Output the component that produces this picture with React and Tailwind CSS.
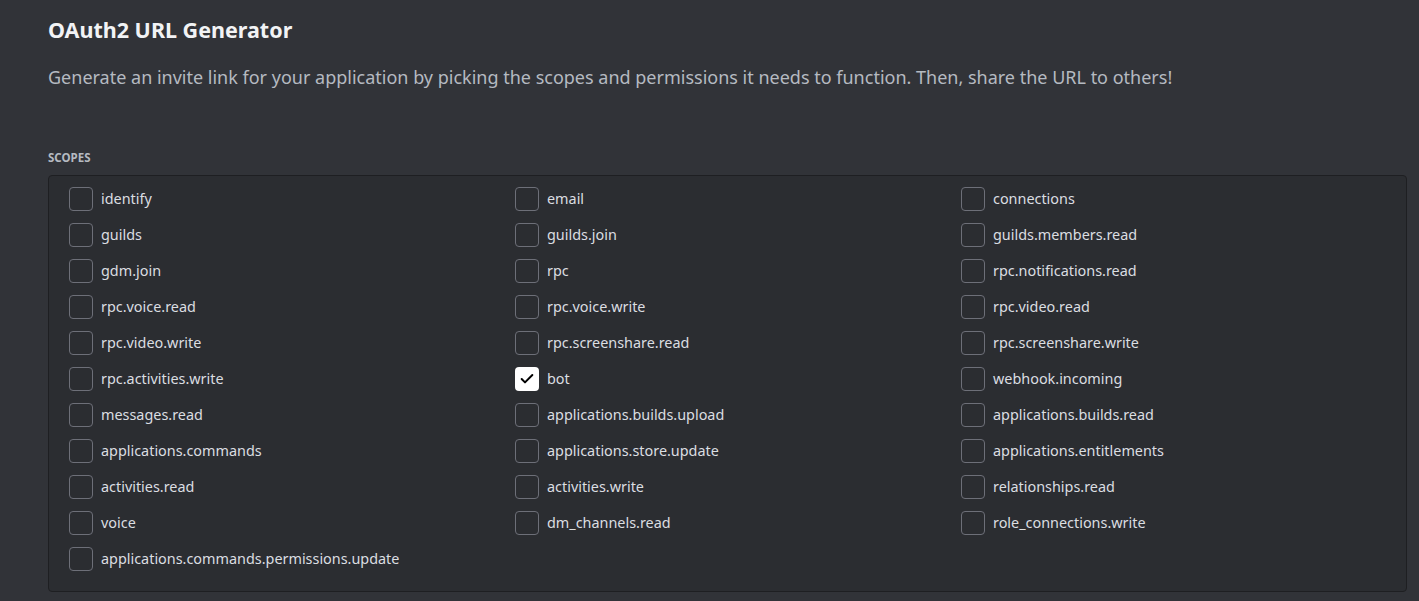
import { Check } from 'lucide-react';

const SCOPES = [
  ['identify', 'email', 'connections'],
  ['guilds', 'guilds.join', 'guilds.members.read'],
  ['gdm.join', 'rpc', 'rpc.notifications.read'],
  ['rpc.voice.read', 'rpc.voice.write', 'rpc.video.read'],
  ['rpc.video.write', 'rpc.screenshare.read', 'rpc.screenshare.write'],
  ['rpc.activities.write', 'bot', 'webhook.incoming'],
  ['messages.read', 'applications.builds.upload', 'applications.builds.read'],
  ['applications.commands', 'applications.store.update', 'applications.entitlements'],
  ['activities.read', 'activities.write', 'relationships.read'],
  ['voice', 'dm_channels.read', 'role_connections.write'],
  ['applications.commands.permissions.update'],
];

const CHECKED = ['bot'];

function ScopeCheckbox({ label }) {
  const checked = CHECKED.includes(label);
  return (
    <label className="flex items-center gap-2 h-6 cursor-pointer">
      {checked ? (
        <span className="w-6 h-6 rounded-[4px] bg-white flex items-center justify-center">
          <Check size={16} strokeWidth={3} className="text-black" />
        </span>
      ) : (
        <span className="w-6 h-6 rounded-[4px] border border-[#6d6f78]" />
      )}
      <span className="text-[14.4px] text-[#dbdee1] leading-5">{label}</span>
    </label>
  );
}

export default function App() {
  const items = SCOPES.flat();
  return (
    <div
      className="min-h-screen w-full bg-[#313338] pl-12 pr-3 pt-4"
      style={{ fontFamily: '"Noto Sans", sans-serif' }}
    >
      <h1 className="text-[21.5px] font-bold text-[#f2f3f5] leading-7">OAuth2 URL Generator</h1>
      <p className="mt-[21px] text-[18px] text-[#b5bac1] leading-6">
        Generate an invite link for your application by picking the scopes and permissions it needs to
        function. Then, share the URL to others!
      </p>
      <div className="mt-[61px] text-[11.5px] font-bold uppercase text-[#b5bac1] leading-4">
        Scopes
      </div>
      <div className="mt-[9px] bg-[#2b2d31] border border-[#1e1f22] rounded-[4px] pl-5 pt-[11px] pb-5">
        <div className="grid grid-cols-[446px_446px_446px] gap-y-3">
          {items.map((s) => (
            <ScopeCheckbox key={s} label={s} />
          ))}
        </div>
      </div>
    </div>
  );
}
